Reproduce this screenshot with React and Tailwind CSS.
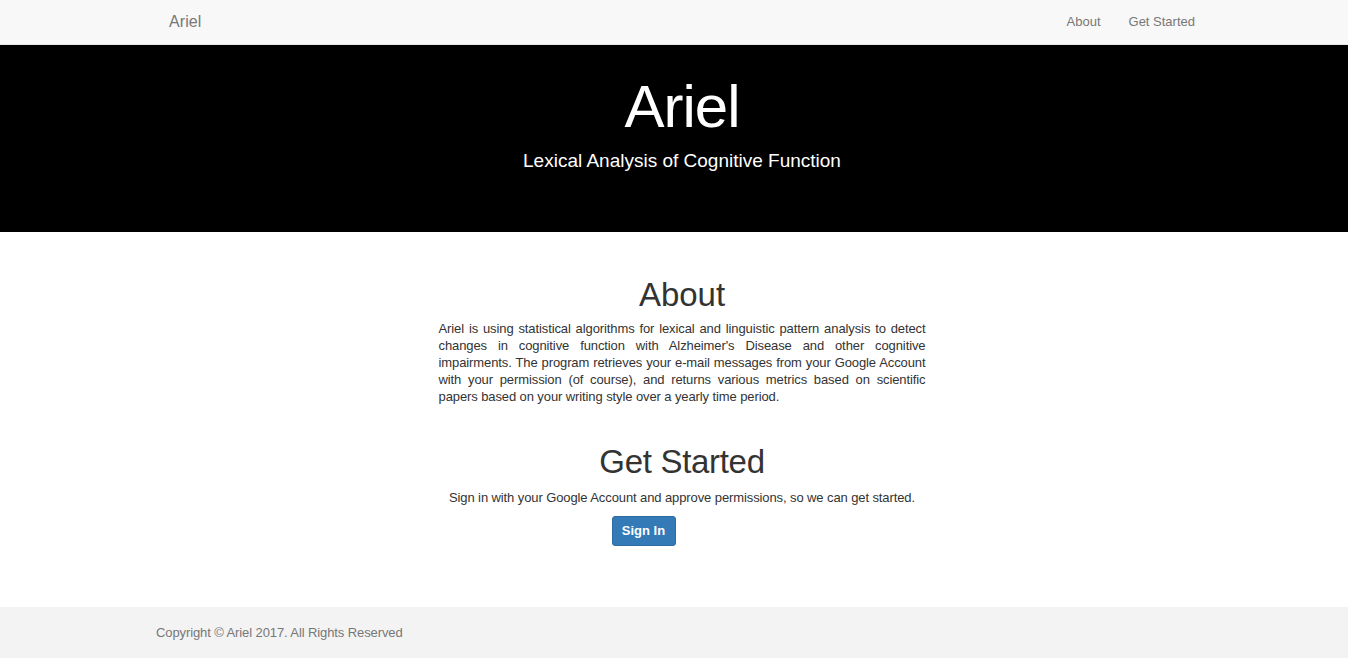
export default function App() {
  return (
    <div className="min-h-[658px] flex flex-col bg-white font-['Liberation_Sans',Arial,sans-serif] text-[#333]">
      {/* Navbar */}
      <nav className="h-[45px] bg-[#f8f8f8] border-b border-[#e7e7e7]">
        <div className="ml-[154px] w-[1056px] h-full flex items-center justify-between px-[15px]">
          <span className="text-[16px] text-[#777] tracking-[0.1px]">Ariel</span>
          <div className="flex gap-[28px] text-[13px] text-[#777]">
            <span>About</span>
            <span>Get Started</span>
          </div>
        </div>
      </nav>

      {/* Hero */}
      <header className="h-[187px] bg-black text-white">
        <div className="ml-[154px] w-[1056px] flex flex-col items-center pt-[26px]">
          <h1 className="text-[60px] leading-[72px] tracking-[-1px]">Ariel</h1>
          <p className="text-[19px] leading-[28px] mt-[4px]">Lexical Analysis of Cognitive Function</p>
        </div>
      </header>

      {/* Content */}
      <main className="flex-1 ml-[154px] w-[1056px] flex flex-col items-center pt-[43px]">
        <h2 className="text-[33px] leading-[40px]">About</h2>
        <p className="w-[487px] text-[13px] leading-[17px] text-justify mt-[5px] tracking-[-0.1px]">
          Ariel is using statistical algorithms for lexical and linguistic pattern analysis to detect changes in
          cognitive function with Alzheimer's Disease and other cognitive impairments. The program retrieves your
          e-mail messages from your Google Account with your permission (of course), and returns various metrics
          based on scientific papers based on your writing style over a yearly time period.
        </p>

        <h2 className="text-[33px] leading-[40px] mt-[37px] tracking-[-0.3px]">Get Started</h2>
        <p className="text-[13px] leading-[17px] mt-[7px] tracking-[-0.1px]">
          Sign in with your Google Account and approve permissions, so we can get started.
        </p>
        <div className="w-[487px] mt-[10px] pl-[173px] pb-[56px]">
          <button className="h-[30px] w-[64px] rounded-[3px] bg-[#337ab7] border border-[#2e6da4] text-white text-[13px] font-semibold">
            Sign In
          </button>
        </div>
      </main>

      {/* Footer */}
      <footer className="h-[51px] bg-[#f3f3f3]">
        <div className="ml-[156px] h-full flex items-center text-[13px] text-[#777] tracking-[-0.1px]">
          Copyright © Ariel 2017. All Rights Reserved
        </div>
      </footer>
    </div>
  );
}
